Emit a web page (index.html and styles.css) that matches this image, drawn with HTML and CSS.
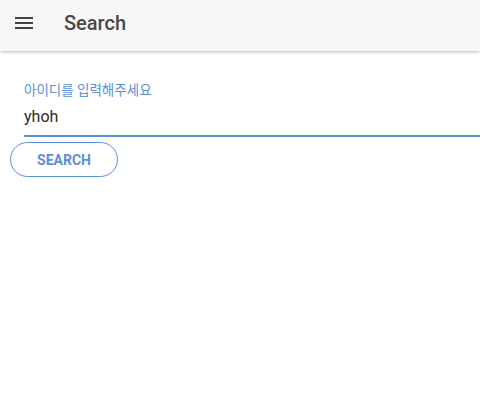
FILE: index.html
```html
<!DOCTYPE html>
<html>
<head>
<meta charset="utf-8">
<link rel="stylesheet" href="styles.css">
</head>
<body>
<header class="toolbar">
  <button class="menu-btn" aria-label="menu">
    <svg width="24" height="24" viewBox="0 0 24 24"><path d="M3 18h18v-2H3v2zm0-5h18v-2H3v2zm0-7v2h18V6H3z" fill="#424242"/></svg>
  </button>
  <h1 class="title">Search</h1>
</header>
<main class="content">
  <div class="field">
    <label class="label">아이디를 입력해주세요</label>
    <div class="input">yhoh</div>
  </div>
  <button class="search-btn">SEARCH</button>
</main>
</body>
</html>
```
FILE: styles.css
```css
html, body {
  margin: 0;
  padding: 0;
  background: #fff;
  font-family: Roboto, "Noto Sans CJK KR", sans-serif;
}
.toolbar {
  height: 46px;
  padding-bottom: 5px;
  background: #f7f7f7;
  display: flex;
  align-items: center;
  padding-left: 12px;
  box-shadow: 0 1px 3px rgba(0,0,0,0.28);
  position: relative;
}
.menu-btn {
  background: none;
  border: none;
  padding: 0;
  width: 24px;
  height: 24px;
  display: flex;
}
.title {
  margin: 0 0 0 28px;
  font-size: 20px;
  font-weight: 500;
  color: #484848;
}
.content {
  padding: 31px 0 0 10px;
}
.field {
  margin-left: 14px;
  display: flex;
  flex-direction: column;
}
.label {
  font-size: 13.5px;
  color: #5b8fd6;
  line-height: 16px;
}
.input {
  font-size: 16px;
  color: #2a2a2a;
  line-height: 20px;
  padding: 9px 0 8px;
  border-bottom: 2px solid #5b8fd6;
}
.search-btn {
  margin-top: 5px;
  width: 108px;
  height: 35px;
  border: 1px solid #5b8fd6;
  border-radius: 18px;
  background: #fff;
  color: #5b8fd6;
  font-family: Roboto, sans-serif;
  font-weight: 700;
  font-size: 14px;
  display: block;
}
```
